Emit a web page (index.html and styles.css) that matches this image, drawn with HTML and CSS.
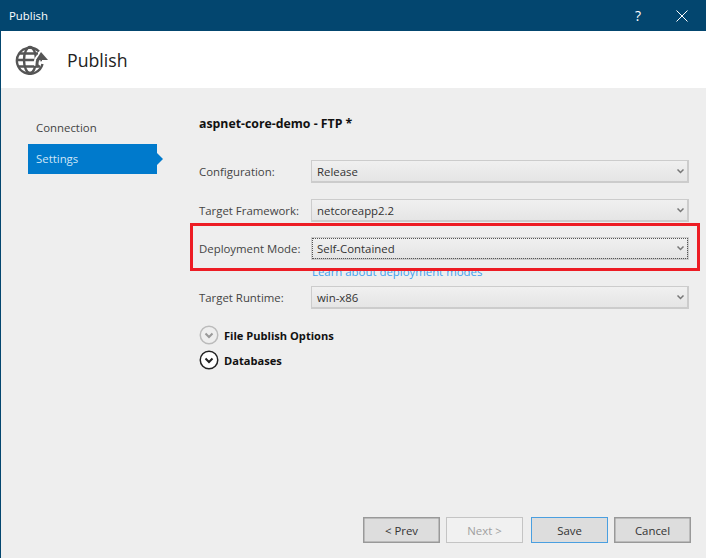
FILE: index.html
```html
<!DOCTYPE html>
<html lang="en">
<head>
  <meta charset="UTF-8">
  <title>Publish</title>
  <link rel="stylesheet" href="styles.css">
</head>
<body>
  <div class="window">
    <div class="titlebar">
      <span class="titlebar-text">Publish</span>
      <span class="help-button">?</span>
      <svg class="close-button" width="12" height="12" viewBox="0 0 12 12">
        <path d="M0.5 0.5L11.5 11.5M11.5 0.5L0.5 11.5" stroke="#fff" stroke-width="1" fill="none"/>
      </svg>
    </div>

    <div class="header">
      <svg class="header-icon" width="34" height="30" viewBox="0 0 34 30">
        <g fill="none" stroke="#555" stroke-width="2.400">
          <path d="M24 6.500A13 13 0 1 0 27.500 19"/>
          <ellipse cx="15" cy="15" rx="6" ry="13"/>
          <path d="M2 15H27M4 8.500H23M4 21.500H25"/>
        </g>
        <path d="M22 20a7 7 0 0 1 3.500-8.500" fill="none" stroke="#fff" stroke-width="6"/>
        <path d="M23 22a7 7 0 0 1 3-10" fill="none" stroke="#555" stroke-width="3"/>
        <path d="M26 7L33 15H21Z" fill="#555"/>
      </svg>
      <h1>Publish</h1>
    </div>

    <div class="main">
      <div class="sidebar">
        <a class="nav-item">Connection</a>
        <a class="nav-item active">Settings</a>
      </div>

      <div class="content">
        <h2>aspnet-core-demo - FTP *</h2>

        <div class="field first">
          <label>Configuration:</label>
          <div class="select"><span>Release</span><svg class="chevron" width="7" height="5" viewBox="0 0 7 5"><path d="M0.500 0.500L3.500 3.500L6.500 0.500" fill="none" stroke="#777" stroke-width="1.500"/></svg></div>
        </div>
        <div class="field">
          <label>Target Framework:</label>
          <div class="select"><span>netcoreapp2.2</span><svg class="chevron" width="7" height="5" viewBox="0 0 7 5"><path d="M0.500 0.500L3.500 3.500L6.500 0.500" fill="none" stroke="#777" stroke-width="1.500"/></svg></div>
        </div>
        <div class="field deployment">
          <label>Deployment Mode:</label>
          <div class="select focused"><span>Self-Contained</span><svg class="chevron" width="7" height="5" viewBox="0 0 7 5"><path d="M0.500 0.500L3.500 3.500L6.500 0.500" fill="none" stroke="#777" stroke-width="1.500"/></svg></div>
        </div>
        <a class="learn-link">Learn about deployment modes</a>
        <div class="field runtime">
          <label>Target Runtime:</label>
          <div class="select"><span>win-x86</span><svg class="chevron" width="7" height="5" viewBox="0 0 7 5"><path d="M0.500 0.500L3.500 3.500L6.500 0.500" fill="none" stroke="#777" stroke-width="1.500"/></svg></div>
        </div>

        <div class="expander first-expander">
          <svg width="20" height="20" viewBox="0 0 20 20"><circle cx="10" cy="10" r="8.750" fill="none" stroke="#bbb" stroke-width="1.500"/><path d="M6.500 8.500L10 12L13.500 8.500" fill="none" stroke="#999" stroke-width="2"/></svg>
          <span>File Publish Options</span>
        </div>
        <div class="expander">
          <svg width="20" height="20" viewBox="0 0 20 20"><circle cx="10" cy="10" r="8.750" fill="#fff" stroke="#222" stroke-width="1.500"/><path d="M6.500 8.500L10 12L13.500 8.500" fill="none" stroke="#222" stroke-width="2"/></svg>
          <span>Databases</span>
        </div>
      </div>

      <div class="footer">
        <button>&lt; Prev</button>
        <button class="disabled">Next &gt;</button>
        <button class="primary">Save</button>
        <button>Cancel</button>
      </div>

      <div class="highlight"></div>
    </div>
  </div>
</body>
</html>
```

FILE: styles.css
```css
/* Reset */
body, h1, h2 {
    margin: 0;
    padding: 0;
}

body {
    font-family: "Open Sans", "Noto Sans", sans-serif;
    font-size: 11.4px;
    color: #333;
    background: #eee;
}

.window {
    width: 706px;
    height: 558px;
    box-sizing: border-box;
    border-left: 1px solid #03466f;
    display: flex;
    flex-direction: column;
    overflow: hidden;
}

/* Title bar */
.titlebar {
    height: 31px;
    margin-left: -1px;
    background: #03466f;
    color: #fff;
    display: flex;
    align-items: center;
    padding-left: 9px;
    flex: none;
}

.titlebar-text {
    flex: 1;
}

.help-button {
    font-size: 14px;
    margin-right: 35px;
}

.close-button {
    margin-right: 18px;
}

/* Header */
.header {
    height: 57px;
    background: #fff;
    display: flex;
    align-items: center;
    padding-left: 14px;
    flex: none;
}

.header-icon {
    margin-right: 18px;
}

h1 {
    font-size: 17.7px;
    font-weight: 400;
    color: #222;
    padding-top: 1px;
}

/* Main area */
.main {
    position: relative;
    flex: 1;
    display: flex;
    flex-wrap: wrap;
    align-content: flex-start;
    background: #eee;
}

.sidebar {
    width: 129px;
    margin-left: 27px;
    padding-top: 25px;
}

.nav-item {
    display: block;
    height: 30px;
    line-height: 30px;
    padding-left: 8px;
    margin-bottom: 1px;
    color: #444;
}

.nav-item.active {
    position: relative;
    background: #007acc;
    color: #cfe6f7;
}

.nav-item.active::after {
    content: "";
    position: absolute;
    left: 100%;
    top: 9px;
    border-left: 6px solid #007acc;
    border-top: 6px solid transparent;
    border-bottom: 6px solid transparent;
}

.content {
    width: 490px;
    margin-left: 42px;
    padding-top: 28px;
    height: 429px;
    box-sizing: border-box;
}

h2 {
    font-size: 12.3px;
    font-weight: 700;
    color: #111;
    line-height: 16px;
}

.field {
    display: flex;
    align-items: center;
    margin-top: 16px;
}

.field.first {
    margin-top: 28px;
}

.field.deployment {
    margin-top: 15px;
}

.field.runtime {
    margin-top: 7px;
}

.field label {
    width: 112px;
    flex: none;
    color: #444;
}

.select {
    flex: 1;
    height: 23px;
    box-sizing: border-box;
    border: 2px solid #ccc;
    border-width: 1px 2px 2px 1px;
    background: linear-gradient(#f0f0f0, #e5e5e5);
    display: flex;
    align-items: center;
    justify-content: space-between;
    padding: 1px 3px 0 5px;
}

.select.focused {
    outline: 1px dotted #555;
    outline-offset: -2px;
}

.learn-link {
    display: block;
    margin: 4px 0 0 113px;
    color: #3c9fee;
    line-height: 15px;
}

.expander {
    display: flex;
    align-items: center;
    gap: 5px;
    height: 20px;
    margin-top: 5px;
    font-size: 11.1px;
    font-weight: 700;
    color: #111;
}

.first-expander {
    margin-top: 16px;
}

/* Footer buttons */
.footer {
    width: 100%;
    display: flex;
    justify-content: flex-end;
    gap: 6px;
    padding-right: 15px;
    box-sizing: border-box;
}

.footer button {
    width: 77px;
    height: 26px;
    border: 1px solid #999;
    box-shadow: inset 0 0 0 0.500px #999;
    background: #ddd;
    font-family: inherit;
    font-size: 11.4px;
    color: #333;
}

.footer .disabled {
    background: #f1f1f1;
    border-color: #c4c4c4;
    box-shadow: none;
    color: #a0a0a0;
}

.footer .primary {
    border-color: #4a9fe0;
    box-shadow: none;
    margin-left: 2px;
}

/* Red annotation drawn over the screenshot */
.highlight {
    position: absolute;
    left: 189px;
    top: 135px;
    width: 504px;
    height: 42px;
    border: 3px solid #ed1c24;
}
```
